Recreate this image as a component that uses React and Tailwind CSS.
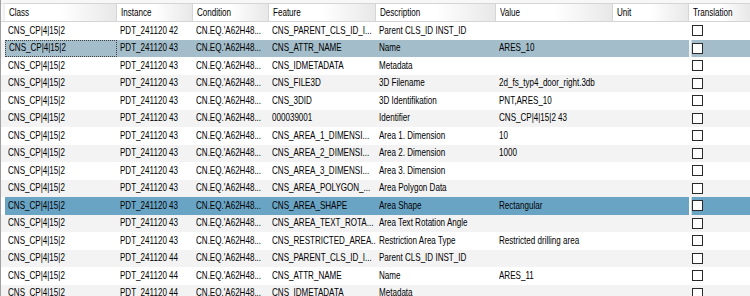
import React from "react";

const cols = [
  { key: "cls", label: "Class", w: "w-[112px]" },
  { key: "inst", label: "Instance", w: "w-[76px]" },
  { key: "cond", label: "Condition", w: "w-[76px]" },
  { key: "feat", label: "Feature", w: "w-[107px]" },
  { key: "desc", label: "Description", w: "w-[120px]" },
  { key: "val", label: "Value", w: "w-[117px]" },
  { key: "unit", label: "Unit", w: "w-[76px]" },
];

const C = "CNS_CP|4|15|2";
const Q = "CN.EQ.'A62H48...";
const rows = [
  ["PDT_241120 42", "CNS_PARENT_CLS_ID_I...", "Parent CLS_ID INST_ID", ""],
  ["PDT_241120 43", "CNS_ATTR_NAME", "Name", "ARES_10"],
  ["PDT_241120 43", "CNS_IDMETADATA", "Metadata", ""],
  ["PDT_241120 43", "CNS_FILE3D", "3D Filename", "2d_fs_typ4_door_right.3db"],
  ["PDT_241120 43", "CNS_3DID", "3D Identifikation", "PNT,ARES_10"],
  ["PDT_241120 43", "000039001", "Identifier", "CNS_CP|4|15|2 43"],
  ["PDT_241120 43", "CNS_AREA_1_DIMENSI...", "Area 1. Dimension", "10"],
  ["PDT_241120 43", "CNS_AREA_2_DIMENSI...", "Area 2. Dimension", "1000"],
  ["PDT_241120 43", "CNS_AREA_3_DIMENSI...", "Area 3. Dimension", ""],
  ["PDT_241120 43", "CNS_AREA_POLYGON_...", "Area Polygon Data", ""],
  ["PDT_241120 43", "CNS_AREA_SHAPE", "Area Shape", "Rectangular"],
  ["PDT_241120 43", "CNS_AREA_TEXT_ROTA...", "Area Text Rotation Angle", ""],
  ["PDT_241120 43", "CNS_RESTRICTED_AREA...", "Restriction Area Type", "Restricted drilling area"],
  ["PDT_241120 44", "CNS_PARENT_CLS_ID_I...", "Parent CLS_ID INST_ID", ""],
  ["PDT_241120 44", "CNS_ATTR_NAME", "Name", "ARES_11"],
  ["PDT_241120 44", "CNS_IDMETADATA", "Metadata", ""],
];

function T({ children }) {
  return (
    <span className="inline-block origin-left scale-x-[0.775] whitespace-nowrap">{children}</span>
  );
}

function Check() {
  return <div className="w-[11px] h-[11px] shrink-0 border border-[#2a2a2a] bg-white" />;
}

export default function App() {
  return (
    <div
      className="w-[750px] h-[296px] overflow-hidden bg-white border-l border-[#a0a0a0] text-[10.4px] text-black"
      style={{ fontFamily: "'Liberation Sans', Arial, sans-serif" }}
    >
      {/* header */}
      <div className="flex h-[22px] pt-[3px] border-b border-[#d5d5d5] bg-[#f7f7f7]">
        <div className="w-[4px] shrink-0 border-t border-[#e0e0e0] bg-gradient-to-r from-white to-[#ececec]" />
        {cols.map((c) => (
          <div
            key={c.key}
            className={`${c.w} shrink-0 flex items-center px-[4px] border-r border-t border-[#d5d5d5] bg-gradient-to-r from-white via-white to-[#e8e8e8] overflow-hidden`}
          >
            <T>{c.label}</T>
          </div>
        ))}
        <div className="flex-1 flex items-center px-[4px] border-t border-[#d5d5d5] bg-gradient-to-r from-white via-white to-[#e8e8e8] overflow-hidden">
          <T>Translation</T>
        </div>
      </div>
      {/* body */}
      <div className="flex flex-col">
        {rows.map((r, i) => {
          const sel = i === 1 || i === 10;
          const selBg = i === 10 ? "bg-[#6aa4c5]" : "bg-[#a3bdca]";
          const rowBg = i % 2 === 1 ? "bg-[#f3f3f3]" : "bg-white";
          const cells = [C, r[0], Q, r[1], r[2], r[3], ""];
          return (
            <div key={i} className={`flex h-[17.5px] shrink-0 ${rowBg}`}>
              <div className="w-[4px] shrink-0" />
              <div className={`flex shrink-0 ${sel ? selBg : ""}`}>
                {cells.map((t, j) => (
                  <div
                    key={j}
                    className={`${cols[j].w} shrink-0 flex items-center px-[3px] overflow-hidden ${
                      i === 1 && j === 0 ? "border border-dotted border-[#404040]" : ""
                    }`}
                  >
                    {t ? <T>{t}</T> : null}
                  </div>
                ))}
              </div>
              <div
                className={`flex-1 flex items-center ${
                  sel ? `${selBg} ml-[2px] border-l border-[#c8dce8]` : "pl-[3px]"
                }`}
              >
                <Check />
              </div>
            </div>
          );
        })}
      </div>
    </div>
  );
}
